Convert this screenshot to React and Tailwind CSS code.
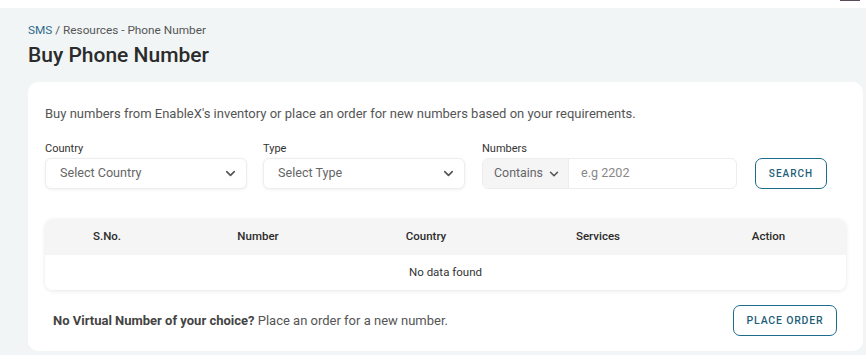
import React from "react";
import { ChevronDown } from "lucide-react";

const Select = ({ placeholder, width }) => (
  <div
    className={`${width} h-[31px] flex items-center justify-between pl-[14px] pr-[8px] bg-white rounded-[6px] border border-[#ededf0] shadow-[0_1px_3px_rgba(0,0,0,0.06)]`}
  >
    <span className="text-[12.6px] text-[#666]">{placeholder}</span>
    <ChevronDown size={15} strokeWidth={2.6} className="text-[#555]" />
  </div>
);

const App = () => {
  const cols = [
    { name: "S.No.", w: "w-[124px]" },
    { name: "Number", w: "w-[178px]" },
    { name: "Country", w: "w-[158px]" },
    { name: "Services", w: "w-[186px]" },
    { name: "Action", w: "flex-1" },
  ];

  return (
    <div className="w-[866px] h-[355px] bg-[#f1f5f6] overflow-hidden" style={{ fontFamily: "Roboto, 'Liberation Sans', sans-serif" }}>
      {/* top bar */}
      <div className="h-[8px] bg-white flex justify-end">
        <div className="w-[20px] h-[1px] mr-[6px] bg-[#5a4a5a]" />
      </div>

      <div className="pl-[28px] pr-[3px]">
        <div className="pt-[14px] text-[11.8px] leading-[16px] text-[#555]">
          <span className="text-[#2d6a8a]">SMS</span> / Resources - Phone Number
        </div>
        <h1 className="mt-[4px] text-[21px] leading-[26px] font-medium text-[#2b2b2b]">Buy Phone Number</h1>

        {/* card */}
        <div className="mt-[14px] bg-white rounded-[10px] h-[269px] pt-[23px] px-[17px]">
          <p className="text-[13px] leading-[18px] text-[#555]">
            Buy numbers from EnableX's inventory or place an order for new numbers based on your requirements.
          </p>

          <div className="mt-[19px] flex items-end">
            <div className="flex flex-col">
              <label className="text-[11px] leading-[14px] text-[#333] mb-[2px]">Country</label>
              <Select placeholder="Select Country" width="w-[202px]" />
            </div>
            <div className="flex flex-col ml-[16px]">
              <label className="text-[11px] leading-[14px] text-[#333] mb-[2px]">Type</label>
              <Select placeholder="Select Type" width="w-[202px]" />
            </div>
            <div className="flex flex-col ml-[17px]">
              <label className="text-[11px] leading-[14px] text-[#333] mb-[2px]">Numbers</label>
              <div className="w-[255px] h-[31px] flex rounded-[6px] border border-[#ededf0] overflow-hidden">
                <div className="w-[86px] bg-[#f5f5f6] flex items-center justify-between pl-[11px] pr-[7px] border-r border-[#ededf0]">
                  <span className="text-[12.4px] text-[#666]">Contains</span>
                  <ChevronDown size={14} strokeWidth={2.6} className="text-[#555]" />
                </div>
                <div className="flex-1 flex items-center pl-[12px] text-[12.6px] text-[#888]">e.g 2202</div>
              </div>
            </div>
            <button className="ml-[18px] w-[72px] h-[31px] rounded-[7px] border border-[#1f6b8c] text-[10px] tracking-[1px] font-medium text-[#1f5f7a]">
              SEARCH
            </button>
          </div>

          {/* table */}
          <div className="mt-[30px] rounded-[8px] shadow-[0_1px_4px_rgba(0,0,0,0.1)] overflow-hidden">
            <div className="flex h-[36px] items-center bg-[#f5f5f5]">
              {cols.map((c) => (
                <div key={c.name} className={`${c.w} text-center text-[11.5px] font-medium text-[#2b2b2b]`}>
                  {c.name}
                </div>
              ))}
            </div>
            <div className="h-[35px] flex items-center justify-center text-[11.5px] text-[#333] bg-white">
              No data found
            </div>
          </div>

          {/* footer */}
          <div className="mt-[15px] flex items-center justify-between pl-[8px] pr-[9px]">
            <p className="text-[13px] text-[#555]">
              <span className="font-bold text-[#444]">No Virtual Number of your choice?</span> Place an order for a new number.
            </p>
            <button className="w-[104px] h-[31px] rounded-[7px] border border-[#1f6b8c] text-[10.5px] tracking-[0.8px] font-medium text-[#1f5f7a]">
              PLACE ORDER
            </button>
          </div>
        </div>
      </div>
    </div>
  );
};

export default App;
